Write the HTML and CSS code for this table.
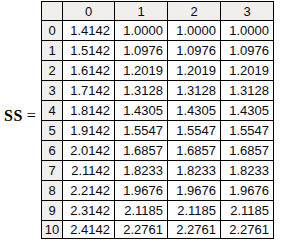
FILE: index.html
```html
<!DOCTYPE html>
<html lang="en">
<head>
  <meta charset="UTF-8" />
  <title>SS matrix</title>
  <link rel="stylesheet" href="styles.css">
</head>
<body>

<div class="sheet">
  <div class="label"><span class="name">SS</span> <span class="eq">=</span></div>

  <table class="matrix">
    <tr class="head">
      <td class="corner"></td>
      <td>0</td><td>1</td><td>2</td><td>3</td>
    </tr>
    <tr><td class="idx">0</td><td>1.4142</td><td>1.0000</td><td>1.0000</td><td>1.0000</td></tr>
    <tr><td class="idx">1</td><td>1.5142</td><td>1.0976</td><td>1.0976</td><td>1.0976</td></tr>
    <tr><td class="idx">2</td><td>1.6142</td><td>1.2019</td><td>1.2019</td><td>1.2019</td></tr>
    <tr><td class="idx">3</td><td>1.7142</td><td>1.3128</td><td>1.3128</td><td>1.3128</td></tr>
    <tr><td class="idx">4</td><td>1.8142</td><td>1.4305</td><td>1.4305</td><td>1.4305</td></tr>
    <tr><td class="idx">5</td><td>1.9142</td><td>1.5547</td><td>1.5547</td><td>1.5547</td></tr>
    <tr><td class="idx">6</td><td>2.0142</td><td>1.6857</td><td>1.6857</td><td>1.6857</td></tr>
    <tr><td class="idx">7</td><td>2.1142</td><td>1.8233</td><td>1.8233</td><td>1.8233</td></tr>
    <tr><td class="idx">8</td><td>2.2142</td><td>1.9676</td><td>1.9676</td><td>1.9676</td></tr>
    <tr><td class="idx">9</td><td>2.3142</td><td>2.1185</td><td>2.1185</td><td>2.1185</td></tr>
    <tr class="last"><td class="idx">10</td><td>2.4142</td><td>2.2761</td><td>2.2761</td><td>2.2761</td></tr>
  </table>
</div>

</body>
</html>
```

FILE: styles.css
```css
* {
  box-sizing: border-box;
  margin: 0;
  padding: 0;
}

body {
  background: #ffffff;
  color: #000000;
}

.sheet {
  display: flex;
  align-items: center;
  padding-top: 1px;
}

.label {
  width: 41px;
  padding-left: 4px;
  padding-bottom: 9px;
  white-space: nowrap;
  font-family: "Liberation Serif", serif;
  font-size: 16px;
}

.name {
  font-weight: bold;
  letter-spacing: 0.5px;
}

.matrix {
  border-collapse: separate;
  border-spacing: 0;
  border-top: 1px solid #000;
  border-left: 1px solid #000;
  font-family: "Liberation Sans", Arial, sans-serif;
  font-size: 13px;
  color: #0a0a14;
}

.matrix td {
  height: 20px;
  width: 53px;
  padding: 0 4px 0 0;
  border-right: 1px solid #000;
  border-bottom: 1px solid #000;
  text-align: right;
  vertical-align: middle;
  line-height: 15px;
}

.matrix td:nth-child(2) {
  width: 52px;
}

.matrix .head td {
  height: 19px;
  background: #f0efeb;
  text-align: center;
  padding: 0;
}

.matrix td.idx,
.matrix td.corner {
  width: 21px;
  background: #f0efeb;
  text-align: center;
  padding: 0;
}

.matrix .last td {
  height: 18px;
}
```
